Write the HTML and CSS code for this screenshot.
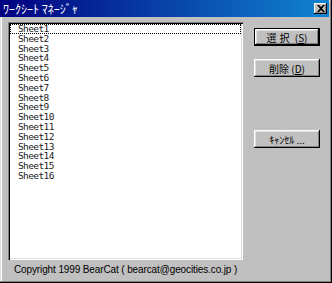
FILE: index.html
```html
<!DOCTYPE html>
<html>
<head>
    <title>ワークシート マネージャ</title>
    <link rel="stylesheet" href="styles.css">
</head>
<body>
    <div class="window">
        <div class="titlebar">
            <span class="title">ﾜｰｸｼｰﾄ ﾏﾈｰｼﾞｬ</span>
            <span class="close">
                <svg width="8" height="7" viewBox="0 0 8 7"><path d="M0 0h2l2 2 2-2h2L5 3.5 8 7H6L4 5 2 7H0l3-3.5z" fill="#000"/></svg>
            </span>
        </div>
        <div class="content">
            <ul class="listbox">
                <li class="focus">Sheet1</li>
                <li>Sheet2</li>
                <li>Sheet3</li>
                <li>Sheet4</li>
                <li>Sheet5</li>
                <li>Sheet6</li>
                <li>Sheet7</li>
                <li>Sheet8</li>
                <li>Sheet9</li>
                <li>Sheet10</li>
                <li>Sheet11</li>
                <li>Sheet12</li>
                <li>Sheet13</li>
                <li>Sheet14</li>
                <li>Sheet15</li>
                <li>Sheet16</li>
            </ul>
            <div class="buttons">
                <button class="btn default"><span class="wide">選択</span> (<u>S</u>)</button>
                <button class="btn">削除 (<u>D</u>)</button>
                <button class="btn cancel">ｷｬﾝｾﾙ ...</button>
            </div>
        </div>
        <div class="footer">Copyright 1999 BearCat ( bearcat@geocities.co.jp )</div>
    </div>
</body>
</html>
```

FILE: styles.css
```css
body {
    margin: 0;
    background-color: #c0c0c0;
    font-family: "Noto Sans CJK JP", sans-serif;
}
.window {
    width: 332px;
    height: 283px;
    box-sizing: border-box;
    padding: 0 3px 3px 0;
    background-color: #c0c0c0;
    box-shadow: inset -1px -1px #000, inset -2px -2px #808080, inset 1px 1px #dfdfdf, inset 2px 2px #fff;
    display: flex;
    flex-direction: column;
}
.titlebar {
    height: 17px;
    background: linear-gradient(to right, #000080, #1084d0);
    display: flex;
    align-items: center;
    justify-content: space-between;
    padding: 0 2px 0 3px;
}
.title {
    color: white;
    font-size: 12px;
    line-height: 17px;
}
.close {
    width: 13px;
    height: 11px;
    background-color: #c0c0c0;
    box-shadow: inset -1px -1px #000, inset 1px 1px #fff, inset -2px -2px #808080;
    display: flex;
    align-items: center;
    justify-content: center;
}
.content {
    display: flex;
    padding: 5px 0 0 8px;
}
.listbox {
    list-style-type: none;
    margin: 0;
    padding: 2px;
    width: 235px;
    height: 238px;
    box-sizing: border-box;
    background-color: white;
    box-shadow: inset 1px 1px #808080, inset 2px 2px #000, inset -1px -1px #fff, inset -2px -2px #dfdfdf;
    font-family: "DejaVu Sans Mono", monospace;
    font-size: 9.5px;
    letter-spacing: -0.6px;
    color: #222;
}
.listbox li {
    height: 9.8px;
    line-height: 9.8px;
    padding-left: 8px;
    box-sizing: border-box;
}
.listbox li.focus {
    outline: 1px dotted #000;
    outline-offset: -1px;
}
.buttons {
    display: flex;
    flex-direction: column;
    margin-left: 11px;
    padding-top: 6px;
}
.btn {
    width: 66px;
    height: 18px;
    margin-bottom: 13px;
    padding: 0;
    border: none;
    background-color: #c0c0c0;
    box-shadow: inset -1px -1px #000, inset 1px 1px #fff, inset -2px -2px #808080, inset 2px 2px #dfdfdf;
    font-family: "Noto Sans CJK JP", sans-serif;
    font-size: 10px;
    color: #000;
}
.btn.default {
    border: 1px solid #000;
}
.btn .wide {
    letter-spacing: 3px;
}
.btn.cancel {
    margin-top: 40px;
}
.footer {
    padding: 4px 0 0 14px;
    font-family: "Liberation Sans", sans-serif;
    font-size: 10px;
    line-height: 12px;
    letter-spacing: -0.12px;
}
```
